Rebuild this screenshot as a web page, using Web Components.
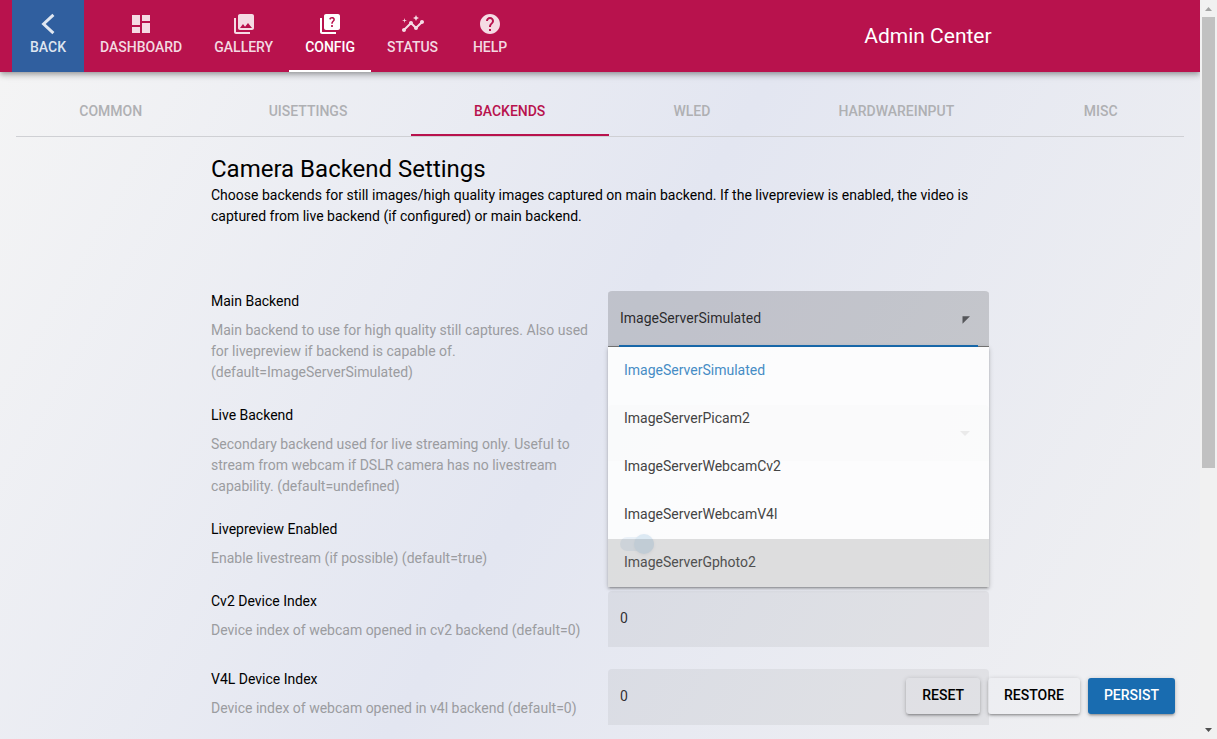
<!DOCTYPE html>
<html lang="en">
<head>
<meta charset="utf-8">
<title>Admin Center</title>
<style>
html, body { height: 100%; }
body { margin: 0; font-family: Roboto, "Liberation Sans", sans-serif; font-size: 14px; line-height: 21px; color: #000; --primary: #b8124d; --accent: #196cb0; --blue: #305f9f; }
</style>
</head>
<body>
<admin-app></admin-app>
<script>
const ICONS = {
  back: '<path d="M17.400 2.800 7.600 12l9.800 9.200" fill="none" stroke="currentColor" stroke-width="3"/>',
  dashboard: '<path d="M3 13h8V3H3v10zm0 8h8v-6H3v6zm10 0h8V11h-8v10zm0-18v6h8V3h-8z"/>',
  gallery: '<path d="M22 16V4c0-1.100-.9-2-2-2H8c-1.100 0-2 .9-2 2v12c0 1.100.9 2 2 2h12c1.100 0 2-.9 2-2zm-11-4 2.030 2.710L16 11l4 5H8l3-4zM2 6v14c0 1.100.9 2 2 2h14v-2H4V6H2z"/>',
  config: '<path d="M4 6H2v14c0 1.100.9 2 2 2h14v-2H4V6zm16-4H8c-1.100 0-2 .9-2 2v12c0 1.100.9 2 2 2h12c1.100 0 2-.9 2-2V4c0-1.100-.9-2-2-2zm-5.990 13c-.59 0-1.050-.47-1.050-1.050 0-.59.47-1.040 1.050-1.040.59 0 1.040.45 1.040 1.040-.01.580-.45 1.050-1.040 1.050zm2.500-6.170c-.63.93-1.230 1.210-1.560 1.810-.13.240-.18.400-.18 1.180h-1.520c0-.41-.06-1.080.26-1.650.41-.73 1.180-1.160 1.630-1.800.48-.68.21-1.940-1.140-1.940-.88 0-1.320.67-1.500 1.230l-1.370-.57C11.510 5.960 12.520 5 13.990 5c1.230 0 2.080.56 2.510 1.260.37.600.58 1.730.01 2.570z"/>',
  status: '<path d="M21 8c-1.450 0-2.260 1.440-1.930 2.510l-3.550 3.560c-.3-.09-.74-.09-1.040 0l-2.550-2.550C12.270 10.450 11.460 9 10 9c-1.450 0-2.270 1.440-1.930 2.520l-4.560 4.550C2.440 15.740 1 16.550 1 18c0 1.100.9 2 2 2 1.450 0 2.260-1.440 1.930-2.510l4.550-4.560c.3.090.74.090 1.040 0l2.550 2.550C12.730 16.550 13.540 18 15 18c1.450 0 2.270-1.440 1.930-2.520l3.560-3.550C21.560 12.260 23 11.450 23 10c0-1.100-.9-2-2-2z"/><path d="m15 9 .94-2.070L18 6l-2.060-.93L15 3l-.92 2.070L12 6l2.080.93zM3.500 11 4 9l2-.5L4 8l-.5-2L3 8l-2 .5L3 9z"/>',
  help: '<path d="M12 2C6.480 2 2 6.480 2 12s4.480 10 10 10 10-4.480 10-10S17.520 2 12 2zm1 17h-2v-2h2v2zm2.070-7.750-.9.920C13.450 12.900 13 13.500 13 15h-2v-.5c0-1.100.45-2.100 1.170-2.830l1.240-1.260c.37-.36.59-.86.59-1.410 0-1.100-.9-2-2-2s-2 .9-2 2H8c0-2.210 1.790-4 4-4s4 1.790 4 4c0 .88-.36 1.680-.93 2.250z"/>'
};

function define(name, html) {
  const t = document.createElement('template');
  t.innerHTML = html;
  customElements.define(name, class extends HTMLElement {
    constructor() {
      super();
      const root = this.attachShadow({ mode: 'open' });
      root.append(t.content.cloneNode(true));
    }
    connectedCallback() {
      const root = this.shadowRoot;
      root.querySelectorAll('[data-attr]').forEach(el => {
        el.textContent = this.getAttribute(el.dataset.attr) || '';
      });
      const icon = root.querySelector('[data-icon]');
      if (icon) icon.innerHTML = ICONS[this.getAttribute('icon')];
      const input = root.querySelector('input[type=text]');
      if (input) input.value = this.getAttribute('value') || '';
      const control = root.querySelector('input, select');
      if (control && this.hasAttribute('label')) control.setAttribute('aria-label', this.getAttribute('label'));
    }
  });
}

define('nav-tab', `<style>
:host { display: flex; }
a { box-sizing: border-box; height: 72px; padding: 12px 16px; display: flex; flex-direction: column; align-items: center; color: rgba(255,255,255,.85); text-decoration: none; font-weight: 500; }
svg { width: 24px; height: 24px; fill: currentColor; display: block; }
span { min-width: 40px; text-align: center; line-height: 22px; }
:host([back]) a { background: var(--blue); }
:host([active]) a { color: #fff; box-shadow: inset 0 -2px #fff; }
</style><a href="#"><svg viewBox="0 0 24 24" data-icon aria-hidden="true"></svg><span data-attr="label"></span></a>`);

define('app-header', `<style>
:host { display: grid; grid-template-columns: 29fr 23fr; align-items: center; padding: 0 12px; background: var(--primary); color: #fff; box-shadow: 0 2px 4px -1px rgba(0,0,0,.2), 0 4px 5px rgba(0,0,0,.14), 0 1px 10px rgba(0,0,0,.12); position: relative; }
nav { display: flex; }
h1 { margin: 0; font-size: 21px; line-height: 32px; font-weight: 400; text-align: center; }
</style><nav><slot></slot></nav><h1>Admin Center</h1>`);

define('section-tab', `<style>
:host { display: flex; flex: 1 1 auto; }
a { box-sizing: border-box; flex: 1; height: 48px; padding: 0 16px 2px; display: flex; align-items: center; justify-content: center; color: #afb0b3; text-decoration: none; font-weight: 500; }
span { min-width: 40px; text-align: center; }
:host([active]) a { color: var(--primary); box-shadow: inset 0 -2px var(--primary); }
</style><a href="#"><span data-attr="label"></span></a>`);

define('section-tabs', `<style>
:host { display: flex; margin: 16px 16px 0; border-bottom: 1px solid #cfd0d4; }
</style><slot></slot>`);

define('setting-row', `<style>
:host { display: grid; grid-template-columns: 1fr 1fr; gap: 16px; align-items: start; }
h3 { margin: 0 0 8px; font-size: 14px; font-weight: 400; }
p { margin: 0; color: #9b9ca0; }
:host([center]) { align-items: center; }
</style><div><h3 data-attr="label"></h3><p><slot name="hint"></slot></p></div><slot></slot>`);

define('text-field', `<style>
:host { display: block; }
input { display: block; box-sizing: border-box; width: 100%; height: 56px; padding: 0 12px 2px; border: 0; border-radius: 4px 4px 0 0; background: rgba(0,0,0,.05); font: inherit; color: rgba(0,0,0,.8); outline: 0; }
</style><input type="text">`);

define('select-field', `<style>
:host { display: block; position: relative; }
select { appearance: none; display: block; box-sizing: border-box; width: 100%; height: 56px; padding: 0 12px 2px; border: 0; border-radius: 4px 4px 0 0; background: rgba(0,0,0,.05); font: inherit; color: rgba(0,0,0,.8); outline: 0; }
svg { position: absolute; right: 12px; top: 16px; width: 24px; height: 24px; fill: #757575; pointer-events: none; }
.turned, .line { display: none; }
:host([open]) select { background: rgba(0,0,0,.155); box-shadow: inset 0 -1px #777; }
:host([open]) .turned { display: block; fill: #55565a; }
:host([open]) .plain { display: none; }
:host([open]) .line { display: block; position: absolute; left: 11px; right: 11px; top: 54px; height: 2px; background: var(--accent); }
</style><select><option data-attr="value"></option></select>
<svg class="plain" viewBox="0 0 24 24"><path d="m7 10 5 5 5-5z"/></svg>
<svg class="turned" viewBox="0 0 24 24"><path d="M9.500 9.300h7.500L9.500 16.800z"/></svg>
<div class="line"></div><slot></slot>`);

define('option-menu', `<style>
:host { position: absolute; z-index: 2; left: 0; right: 0; top: 56px; background: rgba(255,255,255,.85); box-shadow: 0 1px 5px rgba(0,0,0,.2), 0 2px 2px rgba(0,0,0,.14), 0 3px 1px -2px rgba(0,0,0,.12); }
</style><div role="listbox"><slot></slot></div>`);

define('menu-option', `<style>
:host { display: block; }
button { display: block; width: 100%; height: 48px; padding: 0 16px 2px; border: 0; background: none; text-align: left; font: inherit; color: #444; }
:host([selected]) button { color: #468cc5; }
:host([hovered]) button { background: rgba(0,0,0,.12); color: #505050; }
</style><button role="option"><slot></slot></button>`);

define('toggle-switch', `<style>
:host { display: block; padding-left: 12px; height: 20px; }
input { appearance: none; display: block; position: relative; margin: 0; width: 34px; height: 20px; }
input::before { content: ""; position: absolute; left: 0; right: 0; top: 3px; height: 14px; border-radius: 7px; background: var(--accent); opacity: .55; }
input::after { content: ""; position: absolute; right: 0; top: 0; width: 20px; height: 20px; border-radius: 50%; background: var(--accent); box-shadow: 0 1px 3px rgba(0,0,0,.4); }
</style><input type="checkbox" checked>`);

define('action-button', `<style>
:host { display: block; }
button { height: 36px; padding: 0 16px 2px; border: 0; border-radius: 3px; background: transparent; font: inherit; font-weight: 500; color: #000; box-shadow: 0 1px 5px rgba(0,0,0,.2), 0 2px 2px rgba(0,0,0,.14), 0 3px 1px -2px rgba(0,0,0,.12); }
:host([primary]) button { background: var(--accent); color: #fff; }
</style><button><slot></slot></button>`);

define('scroll-rail', `<style>
:host { display: flex; flex-direction: column; background: #f1f1f1; padding: 0 2px; }
svg { width: 13px; height: 17px; flex: none; }
.track { flex: 1; }
.thumb { height: 64%; background: #c1c1c1; }
</style><svg viewBox="0 0 13 17"><path d="M3 11h7L6.500 7z" fill="#a3a3a3"/></svg><div class="track"><div class="thumb"></div></div><svg viewBox="0 0 13 17"><path d="M3 6h7L6.500 10z" fill="#505050"/></svg>`);

define('admin-app', `<style>
:host { display: grid; grid-template-columns: 1fr 17px; height: 100vh; overflow: hidden; }
.page { position: relative; overflow: hidden; background: linear-gradient(120deg, #f5f5f5 0%, #e3e6f1 50%, #f1f1f2 100%); }
main { width: 65%; max-width: 778px; margin: 0 auto; padding-top: 16px; }
h2 { margin: 0; font-size: 24px; line-height: 32px; font-weight: 400; }
.intro { margin: 0 0 64px; }
.rows { display: grid; gap: 22px; }
.rows :first-child { z-index: 2; }
.actions { position: absolute; z-index: 3; right: 25px; bottom: 25px; display: flex; gap: 8px; }
</style>
<div class="page">
<app-header>
<nav-tab back icon="back" label="BACK"></nav-tab>
<nav-tab icon="dashboard" label="DASHBOARD"></nav-tab>
<nav-tab icon="gallery" label="GALLERY"></nav-tab>
<nav-tab active icon="config" label="CONFIG"></nav-tab>
<nav-tab icon="status" label="STATUS"></nav-tab>
<nav-tab icon="help" label="HELP"></nav-tab>
</app-header>
<section-tabs>
<section-tab label="COMMON"></section-tab>
<section-tab label="UISETTINGS"></section-tab>
<section-tab active label="BACKENDS"></section-tab>
<section-tab label="WLED"></section-tab>
<section-tab label="HARDWAREINPUT"></section-tab>
<section-tab label="MISC"></section-tab>
</section-tabs>
<main>
<h2>Camera Backend Settings</h2>
<p class="intro">Choose backends for still images/high quality images captured on main backend. If the livepreview is enabled, the video is captured from live backend (if configured) or main backend.</p>
<div class="rows">
<setting-row label="Main Backend"><span slot="hint">Main backend to use for high quality still captures. Also used for livepreview if backend is capable of. (default=ImageServerSimulated)</span>
<select-field open label="Main Backend" value="ImageServerSimulated"><option-menu>
<menu-option selected>ImageServerSimulated</menu-option>
<menu-option>ImageServerPicam2</menu-option>
<menu-option>ImageServerWebcamCv2</menu-option>
<menu-option>ImageServerWebcamV4l</menu-option>
<menu-option hovered>ImageServerGphoto2</menu-option>
</option-menu></select-field></setting-row>
<setting-row label="Live Backend"><span slot="hint">Secondary backend used for live streaming only. Useful to stream from webcam if DSLR camera has no livestream capability. (default=undefined)</span><select-field label="Live Backend"></select-field></setting-row>
<setting-row center label="Livepreview Enabled"><span slot="hint">Enable livestream (if possible) (default=true)</span><toggle-switch label="Livepreview Enabled"></toggle-switch></setting-row>
<setting-row label="Cv2 Device Index"><span slot="hint">Device index of webcam opened in cv2 backend (default=0)</span><text-field label="Cv2 Device Index" value="0"></text-field></setting-row>
<setting-row label="V4L Device Index"><span slot="hint">Device index of webcam opened in v4l backend (default=0)</span><text-field label="V4L Device Index" value="0"></text-field></setting-row>
</div>
</main>
<div class="actions"><action-button>RESET</action-button><action-button>RESTORE</action-button><action-button primary>PERSIST</action-button></div>
</div>
<scroll-rail></scroll-rail>`);
</script>
</body>
</html>
